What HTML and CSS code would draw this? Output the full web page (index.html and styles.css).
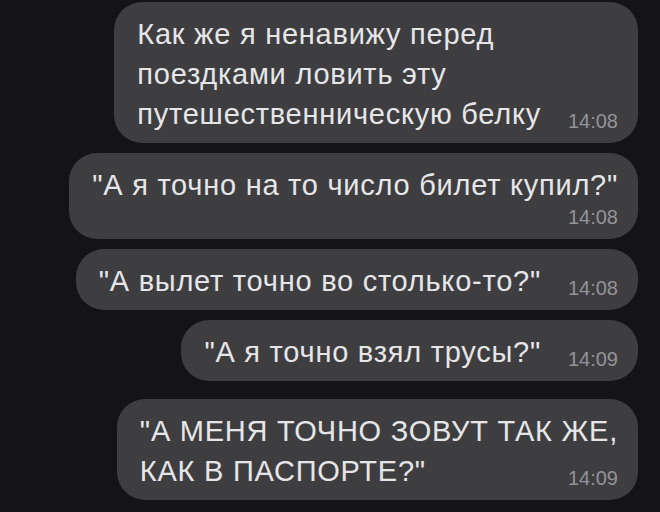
FILE: index.html
```html
<!DOCTYPE html>
<html lang="ru">
<head>
  <meta charset="UTF-8" />
  <meta name="viewport" content="width=device-width, initial-scale=1.0" />
  <title>Чат</title>
  <link rel="stylesheet" href="styles.css">
</head>
<body>
  <div class="chat">
    <div class="bubble">
      <span class="text">Как же я ненавижу перед<br>поездками ловить эту<br>путешественническую белку</span>
      <span class="time">14:08</span>
    </div>

    <div class="bubble">
      <span class="text">"А я точно на то число билет купил?"</span>
      <span class="time time-below">14:08</span>
    </div>

    <div class="bubble">
      <span class="text">"А вылет точно во столько-то?"</span>
      <span class="time">14:08</span>
    </div>

    <div class="bubble">
      <span class="text">"А я точно взял трусы?"</span>
      <span class="time">14:09</span>
    </div>

    <div class="bubble bubble-spaced">
      <span class="text">"А МЕНЯ ТОЧНО ЗОВУТ ТАК ЖЕ,<br>КАК В ПАСПОРТЕ?"</span>
      <span class="time">14:09</span>
    </div>
  </div>
</body>
</html>
```

FILE: styles.css
```css
* {
  box-sizing: border-box;
}

body {
  margin: 0;
  background: #141416;
  font-family: 'Liberation Sans', Arial, sans-serif;
  color: #e6e6e8;
  min-height: 100vh;
}

.chat {
  display: flex;
  flex-direction: column;
  align-items: flex-end;
  gap: 10px;
  padding: 2px 22px 0 0;
}

.bubble {
  display: flow-root;
  max-width: 620px;
  padding: 12px 20px 9px 23px;
  background: #3e3e41;
  border-radius: 28px;
  font-size: 29px;
  line-height: 40px;
  white-space: nowrap;
}

.bubble-spaced {
  margin-top: 8px;
}

.text {
  letter-spacing: 0.75px;
}

.time {
  float: right;
  margin: 15px 0 0 27px;
  font-size: 20px;
  line-height: 25px;
  color: #939398;
}

.time-below {
  float: none;
  display: block;
  margin: 0;
  text-align: right;
}
```
